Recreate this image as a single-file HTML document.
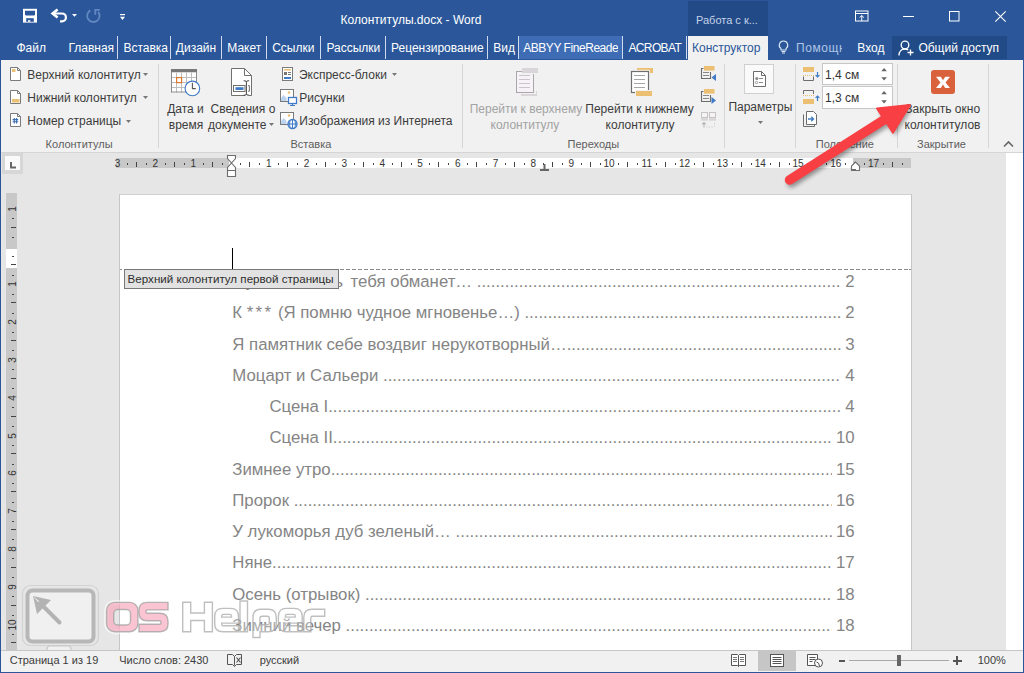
<!DOCTYPE html>
<html><head><meta charset="utf-8"><style>
html,body{margin:0;padding:0;width:1024px;height:673px;overflow:hidden;background:#e6e6e6}
body{position:relative;font-family:"Liberation Sans",sans-serif}
.t{position:absolute;line-height:1;white-space:pre}
.r{position:absolute}
.s{position:absolute;overflow:visible}
.rn{font-size:10px;color:#333}
.vr{transform:rotate(-90deg)}
.toc{position:absolute;display:flex;font-size:16.8px;line-height:1;color:#858585;white-space:pre}
.toc .tt{flex:none}
.toc .dots{flex:1 1 auto;overflow:hidden}
.toc .num{flex:none;padding-left:4px}
.wm{position:absolute;font-family:"Liberation Sans",sans-serif;font-weight:bold;font-size:40px;line-height:40px;color:rgba(244,150,170,.6);-webkit-text-stroke:1px rgba(190,190,190,.6)}
.wm2{position:absolute;font-family:"Liberation Sans",sans-serif;font-weight:bold;font-size:40px;line-height:40px;color:rgba(255,255,255,.4);-webkit-text-stroke:1.5px rgba(170,170,170,.6)}
</style></head><body>
<div class="r" style="left:0px;top:0px;width:1024px;height:60px;background:#2b579a;"></div>
<div class="r" style="left:688px;top:1px;width:80px;height:35px;background:#224a86;"></div>
<div class="t " style="left:696.00px;top:14.69px;font-size:11px;color:#c5d3ea;">Работа с к...</div>
<div class="t " style="left:340.50px;top:13.59px;font-size:12px;color:#ffffff;">Колонтитулы.docx - Word</div>
<svg class="s" style="left:22px;top:8px;" width="16" height="16" viewBox="0 0 16 16"><rect x="1" y="0.8" width="14" height="13.8" fill="#fff"/><path d="M3 2.8h10v3.8l-0.8 0.8h-8.4l-0.8-0.8z" fill="#2b579a"/><rect x="4.2" y="10.2" width="7.6" height="3.6" fill="#2b579a"/><rect x="6" y="12.2" width="2.3" height="1.6" fill="#fff"/></svg>
<svg class="s" style="left:50px;top:8px;" width="18" height="16" viewBox="0 0 18 16"><path d="M3.5 5.5H12A3.9 3.9 0 0 1 12 13.3H10" fill="none" stroke="#fff" stroke-width="2.2"/><path d="M7.6 1.5L2.6 5.5L7.6 9.5" fill="none" stroke="#fff" stroke-width="2.6"/></svg>
<svg class="s" style="left:72px;top:14px;" width="6" height="4" viewBox="0 0 6 4"><path d="M0 0h5l-2.5 2.8z" fill="#fff"/></svg>
<svg class="s" style="left:86px;top:8px;" width="16" height="16" viewBox="0 0 16 16"><path d="M4.3 2.4A6.2 6.2 0 1 0 12.15 3.8" fill="none" stroke="#6288c2" stroke-width="1.8"/><path d="M9.3 6.7V1.9H13.8" fill="none" stroke="#6288c2" stroke-width="1.8"/></svg>
<svg class="s" style="left:120px;top:14px;" width="6" height="7" viewBox="0 0 6 7"><rect x="0" y="0" width="5" height="1.2" fill="#fff"/><path d="M0 2.8h5l-2.5 3.2z" fill="#fff"/></svg>
<svg class="s" style="left:855px;top:10px;" width="14" height="12" viewBox="0 0 14 12"><rect x="0.5" y="1" width="12.5" height="10" fill="none" stroke="#fff"/><rect x="0.5" y="3" width="12.5" height="1" fill="#fff"/><path d="M6.75 11V5.5M4.6 7.6L6.75 5.5l2.15 2.1" fill="none" stroke="#fff"/></svg>
<div class="r" style="left:903px;top:16px;width:11px;height:1px;background:#fff;"></div>
<svg class="s" style="left:949px;top:11px;" width="11" height="11" viewBox="0 0 11 11"><rect x="0.5" y="0.5" width="9.5" height="9.5" fill="none" stroke="#fff"/></svg>
<svg class="s" style="left:995px;top:11px;" width="11" height="11" viewBox="0 0 11 11"><path d="M0.3 0.3l10.4 10.4M10.7 0.3L0.3 10.7" fill="none" stroke="#fff" stroke-width="1.1"/></svg>
<div class="r" style="left:117px;top:36px;width:1px;height:23px;background:#d0dcee;"></div>
<div class="r" style="left:170px;top:36px;width:1px;height:23px;background:#d0dcee;"></div>
<div class="r" style="left:221px;top:36px;width:1px;height:23px;background:#d0dcee;"></div>
<div class="r" style="left:266px;top:36px;width:1px;height:23px;background:#d0dcee;"></div>
<div class="r" style="left:320px;top:36px;width:1px;height:23px;background:#d0dcee;"></div>
<div class="r" style="left:385px;top:36px;width:1px;height:23px;background:#d0dcee;"></div>
<div class="r" style="left:487px;top:36px;width:1px;height:23px;background:#d0dcee;"></div>
<div class="r" style="left:518px;top:36px;width:1px;height:23px;background:#d0dcee;"></div>
<div class="r" style="left:622px;top:36px;width:1px;height:23px;background:#d0dcee;"></div>
<div class="r" style="left:686px;top:36px;width:1px;height:23px;background:#d0dcee;"></div>
<div class="r" style="left:519px;top:36px;width:103px;height:23px;background:#3e6db5;"></div>
<div class="r" style="left:688px;top:36px;width:80px;height:24px;background:#f1f1f1;"></div>
<div class="t " style="left:16.40px;top:41.84px;font-size:12px;color:#ffffff;">Файл</div>
<div class="t " style="left:68.40px;top:41.84px;font-size:12px;color:#ffffff;">Главная</div>
<div class="t " style="left:123.40px;top:41.84px;font-size:12px;color:#ffffff;">Вставка</div>
<div class="t " style="left:175.80px;top:41.84px;font-size:12px;color:#ffffff;">Дизайн</div>
<div class="t " style="left:227.30px;top:41.84px;font-size:12px;color:#ffffff;">Макет</div>
<div class="t " style="left:272.20px;top:41.84px;font-size:12px;color:#ffffff;">Ссылки</div>
<div class="t " style="left:326.40px;top:41.84px;font-size:12px;color:#ffffff;">Рассылки</div>
<div class="t " style="left:391.00px;top:41.84px;font-size:12px;color:#ffffff;">Рецензирование</div>
<div class="t " style="left:493.30px;top:41.84px;font-size:12px;color:#ffffff;">Вид</div>
<div class="r" style="left:519px;top:36px;width:99px;height:23px;overflow:hidden">
<div class="t " style="left:4.20px;top:5.84px;font-size:12px;color:#ffffff;letter-spacing:-0.45px">ABBYY FineReader</div>
</div>
<div class="t " style="left:692.00px;top:41.84px;font-size:12px;color:#2b579a;">Конструктор</div>
<div class="t " style="left:628.50px;top:41.84px;font-size:12px;color:#ffffff;letter-spacing:-0.65px">ACROBAT</div>
<svg class="s" style="left:778px;top:40px;" width="11" height="14" viewBox="0 0 11 14"><path d="M5.5 1a4.2 4.2 0 0 0-2.5 7.6V10h5V8.6A4.2 4.2 0 0 0 5.5 1z" fill="none" stroke="#dce6f4" stroke-width="1.1"/><path d="M3.5 11.5h4M4 13h3" stroke="#dce6f4" stroke-width="1.1"/></svg>
<div class="r" style="left:796px;top:36px;width:46px;height:23px;overflow:hidden">
<div class="t " style="left:0.00px;top:5.84px;font-size:12px;color:#b0c6e6;letter-spacing:0.6px">Помощн</div>
</div>
<div class="t " style="left:857.30px;top:41.84px;font-size:12px;color:#ffffff;">Вход</div>
<div class="r" style="left:892px;top:36px;width:115px;height:23px;background:#214b87;"></div>
<svg class="s" style="left:898px;top:40px;" width="17" height="16" viewBox="0 0 17 16"><circle cx="7" cy="5" r="3.8" fill="none" stroke="#fff" stroke-width="1.3"/><path d="M1 15.5c0-4 2.5-6.5 6-6.5 1.2 0 2.3.3 3.2.9" fill="none" stroke="#fff" stroke-width="1.3"/><path d="M12.5 9.5v6M9.5 12.5h6" stroke="#fff" stroke-width="1.3"/></svg>
<div class="t " style="left:918.40px;top:41.84px;font-size:12px;color:#ffffff;">Общий доступ</div>
<div class="r" style="left:1px;top:60px;width:1022px;height:92px;background:#f1f1f1;"></div>
<div class="r" style="left:1px;top:152px;width:1022px;height:1px;background:#d5d5d5;"></div>
<div class="r" style="left:158px;top:64px;width:1px;height:84px;background:#d6d6d6;"></div>
<div class="r" style="left:462px;top:64px;width:1px;height:84px;background:#d6d6d6;"></div>
<div class="r" style="left:724px;top:64px;width:1px;height:84px;background:#d6d6d6;"></div>
<div class="r" style="left:795px;top:64px;width:1px;height:84px;background:#d6d6d6;"></div>
<div class="r" style="left:897px;top:64px;width:1px;height:84px;background:#d6d6d6;"></div>
<div class="r" style="left:988px;top:64px;width:1px;height:84px;background:#d6d6d6;"></div>
<svg class="s" style="left:10px;top:67px;" width="12" height="15" viewBox="0 0 12 15"><path d="M0.5 0.5h7l3 3v10h-10z" fill="#fff" stroke="#7a7a7a"/><path d="M7.5 0.5v3h3" fill="none" stroke="#7a7a7a"/><rect x="2" y="2" width="3.5" height="3" fill="#ebc073"/></svg>
<div class="t " style="left:27.30px;top:68.84px;font-size:12px;color:#3c3c3c;">Верхний колонтитул</div>
<svg class="s" style="left:143px;top:73px;" width="5" height="3" viewBox="0 0 5 3"><path d="M0 0h5l-2.5 3z" fill="#777"/></svg>
<svg class="s" style="left:10px;top:90px;" width="12" height="15" viewBox="0 0 12 15"><path d="M0.5 0.5h7l3 3v10h-10z" fill="#fff" stroke="#7a7a7a"/><path d="M7.5 0.5v3h3" fill="none" stroke="#7a7a7a"/><rect x="2" y="9" width="7.5" height="3.5" fill="#ebc073"/></svg>
<div class="t " style="left:27.30px;top:91.59px;font-size:12px;color:#3c3c3c;">Нижний колонтитул</div>
<svg class="s" style="left:143px;top:96px;" width="5" height="3" viewBox="0 0 5 3"><path d="M0 0h5l-2.5 3z" fill="#777"/></svg>
<svg class="s" style="left:10px;top:113px;" width="12" height="15" viewBox="0 0 12 15"><path d="M0.5 0.5h7l3 3v10h-10z" fill="#fff" stroke="#7a7a7a"/><path d="M7.5 0.5v3h3" fill="none" stroke="#7a7a7a"/><path d="M4.3 5v5.5M6.6 5v5.5M2.6 6.6h5.6M2.6 8.8h5.6" stroke="#3c6eb4" stroke-width="1.1"/></svg>
<div class="t " style="left:27.30px;top:115.04px;font-size:12px;color:#3c3c3c;">Номер страницы</div>
<svg class="s" style="left:125.5px;top:120px;" width="5" height="3" viewBox="0 0 5 3"><path d="M0 0h5l-2.5 3z" fill="#777"/></svg>
<div class="t " style="left:45.60px;top:139.19px;font-size:11px;color:#5e5e5e;">Колонтитулы</div>
<svg class="s" style="left:171px;top:69px;" width="30" height="28" viewBox="0 0 30 28"><rect x="0" y="0" width="26" height="3.5" fill="#787878"/><rect x="0.5" y="3.5" width="25" height="20" fill="#fff"/><rect x="5" y="3.5" width="1" height="20" fill="#bdbdbd"/><rect x="10" y="3.5" width="1" height="20" fill="#bdbdbd"/><rect x="15" y="3.5" width="1" height="20" fill="#bdbdbd"/><rect x="20" y="3.5" width="1" height="20" fill="#bdbdbd"/><rect x="0" y="8" width="26" height="1" fill="#bdbdbd"/><rect x="0" y="13" width="26" height="1" fill="#bdbdbd"/><rect x="0" y="18" width="26" height="1" fill="#bdbdbd"/><rect x="0" y="3" width="1" height="20.5" fill="#8c8c8c"/><rect x="25" y="3" width="1" height="10" fill="#8c8c8c"/><rect x="0" y="22.5" width="16" height="1" fill="#8c8c8c"/><rect x="5.6" y="8.6" width="5" height="5" fill="#fff" stroke="#e0782c" stroke-width="1.2"/><circle cx="21.4" cy="19.4" r="7.3" fill="#fff" stroke="#3f7bc6" stroke-width="1.1"/><path d="M21.4 13.8V19.6H24.8" fill="none" stroke="#555" stroke-width="1.1"/></svg>
<div class="t " style="left:167.20px;top:102.84px;font-size:12px;color:#3c3c3c;">Дата и</div>
<div class="t " style="left:168.75px;top:119.44px;font-size:12px;color:#3c3c3c;">время</div>
<svg class="s" style="left:231px;top:68px;" width="23" height="29" viewBox="0 0 23 29"><path d="M0.5 0.5H13.5L20.5 7.5V27.5H0.5Z" fill="#fff" stroke="#707070"/><path d="M13.5 0.5V7.5H20.5" fill="none" stroke="#707070"/><rect x="14" y="12" width="4" height="16" fill="#fff"/><rect x="2.5" y="17.5" width="11.5" height="6" fill="#fff" stroke="#707070"/><rect x="4.5" y="19.2" width="8" height="2.8" fill="#3f7bc6"/><path d="M12.6 12.8H13.8Q15.4 12.8 15.4 14.2Q15.4 12.8 17 12.8H18.2M15.4 14.2V25.8M12.6 27.2H13.8Q15.4 27.2 15.4 25.8Q15.4 27.2 17 27.2H18.2" fill="none" stroke="#444" stroke-width="1"/><path d="M17 17.7H18.4V23.2H17" fill="none" stroke="#707070"/></svg>
<div class="t " style="left:210.50px;top:102.84px;font-size:12px;color:#3c3c3c;">Сведения о</div>
<div class="t " style="left:208.00px;top:119.44px;font-size:12px;color:#3c3c3c;">документе</div>
<svg class="s" style="left:269px;top:123px;" width="5" height="3" viewBox="0 0 5 3"><path d="M0 0h5l-2.5 3z" fill="#777"/></svg>
<svg class="s" style="left:282px;top:67px;" width="12" height="15" viewBox="0 0 12 15"><rect x="0.5" y="0.5" width="10" height="13" fill="#fff" stroke="#7a7a7a"/><rect x="2" y="2" width="7" height="1.5" fill="#ebc073"/><rect x="2" y="5" width="3" height="3" fill="#777"/><rect x="6" y="5" width="3" height="1" fill="#777"/><rect x="6" y="7" width="3" height="1" fill="#777"/><rect x="2" y="10" width="7" height="2" fill="#3f7bc6"/></svg>
<div class="t " style="left:298.90px;top:69.04px;font-size:12px;color:#3c3c3c;">Экспресс-блоки</div>
<svg class="s" style="left:392px;top:73px;" width="5" height="3" viewBox="0 0 5 3"><path d="M0 0h5l-2.5 3z" fill="#777"/></svg>
<svg class="s" style="left:280px;top:89px;" width="18" height="17" viewBox="0 0 18 17"><rect x="0.5" y="0.5" width="13" height="12" fill="#fff" stroke="#7a7a7a"/><circle cx="9" cy="3.5" r="1.3" fill="#ebc073"/><path d="M1 12V9l2.5-3 3 3v3z" fill="#bcd3ee"/><rect x="8.5" y="8.5" width="8" height="6" fill="#fff" stroke="#3f7bc6" stroke-width="1.3"/><path d="M12.5 14.5v2M10 16.5h5" stroke="#3f7bc6" stroke-width="1.2"/></svg>
<div class="t " style="left:299.30px;top:92.04px;font-size:12px;color:#3c3c3c;">Рисунки</div>
<svg class="s" style="left:280px;top:112px;" width="18" height="17" viewBox="0 0 18 17"><rect x="0.5" y="0.5" width="13" height="12" fill="#fff" stroke="#7a7a7a"/><circle cx="9" cy="3.5" r="1.3" fill="#ebc073"/><path d="M1 12V9l2.5-3 3 3v3z" fill="#bcd3ee"/><circle cx="12.5" cy="12" r="4.5" fill="#fff" stroke="#3f7bc6" stroke-width="1.3"/><path d="M8 12h9M12.5 7.5v9M10.3 8.2c-1 2.5-1 5 0 7.6M14.7 8.2c1 2.5 1 5 0 7.6" fill="none" stroke="#3f7bc6" stroke-width="1"/></svg>
<div class="t " style="left:299.30px;top:115.04px;font-size:12px;color:#3c3c3c;">Изображения из Интернета</div>
<div class="t " style="left:290.50px;top:139.19px;font-size:11px;color:#5e5e5e;">Вставка</div>
<svg class="s" style="left:516px;top:67px;" width="23" height="30" viewBox="0 0 23 30"><rect x="0.5" y="4.5" width="17" height="21" fill="#f7f2f7" stroke="#a8a8a8"/><rect x="6" y="1" width="16" height="5" fill="#d9d5d9"/><rect x="4.5" y="6" width="18" height="2" fill="#f1f1f1"/><rect x="6" y="1" width="16" height="5" fill="#d9d5d9"/><path d="M17.5 7v18.5" stroke="#a8a8a8"/><rect x="3" y="8" width="11" height="1" fill="#c9c5c9"/><rect x="3" y="12" width="11" height="1" fill="#c9c5c9"/><rect x="3" y="16" width="11" height="1" fill="#c9c5c9"/><rect x="3" y="20" width="11" height="1" fill="#c9c5c9"/><rect x="5" y="27" width="16" height="2" fill="#d9d5d9"/><rect x="20" y="24" width="1" height="5" fill="#d9d5d9"/></svg>
<svg class="s" style="left:631px;top:67px;" width="23" height="30" viewBox="0 0 23 30"><rect x="6" y="1" width="16" height="5" fill="#ebc073"/><rect x="0.5" y="4.5" width="17" height="21" fill="#fff" stroke="#6f6f6f" stroke-width="1.2"/><rect x="18.2" y="3.5" width="0.8" height="3" fill="#f1f1f1"/><rect x="4.5" y="2.8" width="14.5" height="0.9" fill="#f1f1f1"/><rect x="3" y="8" width="11" height="1" fill="#a6a6a6"/><rect x="3" y="12" width="11" height="1" fill="#a6a6a6"/><rect x="3" y="16" width="11" height="1" fill="#a6a6a6"/><rect x="3" y="20" width="11" height="1" fill="#a6a6a6"/><rect x="4" y="23" width="18" height="6" fill="#f1f1f1"/><rect x="5" y="24" width="16" height="5" fill="#ebc073"/></svg>
<div class="t " style="left:469.70px;top:102.84px;font-size:12px;color:#a3a3a3;">Перейти к верхнему</div>
<div class="t " style="left:490.50px;top:119.44px;font-size:12px;color:#a3a3a3;">колонтитулу</div>
<div class="t " style="left:585.30px;top:102.84px;font-size:12px;color:#3c3c3c;">Перейти к нижнему</div>
<div class="t " style="left:605.60px;top:119.44px;font-size:12px;color:#3c3c3c;">колонтитулу</div>
<div class="t " style="left:567.50px;top:139.19px;font-size:11px;color:#5e5e5e;">Переходы</div>
<svg class="s" style="left:701px;top:66px;" width="16" height="16" viewBox="0 0 16 16"><rect x="3" y="0" width="10.5" height="4.6" fill="#ebc073"/><path d="M2.5 2.5H0.5V12.5H9.5V6" fill="none" stroke="#6d6d6d" stroke-width="1.1"/><rect x="2" y="6" width="6" height="1" fill="#888"/><rect x="2" y="9" width="6" height="1" fill="#888"/><path d="M15 8v7l-4.5-3.5z" fill="#3f7bc6"/></svg>
<svg class="s" style="left:701px;top:89px;" width="16" height="16" viewBox="0 0 16 16"><rect x="3" y="0" width="10.5" height="4.6" fill="#ebc073"/><path d="M2.5 2.5H0.5V12.5H9.5V6" fill="none" stroke="#6d6d6d" stroke-width="1.1"/><rect x="2" y="6" width="6" height="1" fill="#888"/><rect x="2" y="9" width="6" height="1" fill="#888"/><path d="M10.5 8v7l4.5-3.5z" fill="#3f7bc6"/></svg>
<svg class="s" style="left:701px;top:112px;" width="16" height="17" viewBox="0 0 16 17"><rect x="0.5" y="0.5" width="6" height="5" fill="#f6f2f6" stroke="#c4c4c4"/><rect x="8.5" y="0.5" width="6" height="5" fill="#f6f2f6" stroke="#c4c4c4"/><rect x="0" y="6.2" width="7" height="2.5" fill="#d6d6d6"/><rect x="8" y="6.2" width="7" height="2.5" fill="#d6d6d6"/><path d="M3 15.5v-5M1.2 12.3L3 10.5l1.8 1.8" fill="none" stroke="#b4b4b4" stroke-width="1.1"/><path d="M5.5 15h1M8 15h1M10.5 15h1M13.5 11v1M13.5 13.5v1" stroke="#c4c4c4"/></svg>
<div class="r" style="left:744px;top:64px;width:30px;height:30px;background:#fafafa;box-sizing:border-box;border:1px solid #d0d0d0"></div>
<svg class="s" style="left:753px;top:71px;" width="14" height="17" viewBox="0 0 14 17"><path d="M0.5 0.5h8l4 4v11h-12z" fill="#fff" stroke="#6d6d6d"/><path d="M8.5 0.5v4h4" fill="none" stroke="#6d6d6d"/><circle cx="3.8" cy="7.5" r="1.5" fill="#888"/><circle cx="3.5" cy="11.5" r="1.2" fill="none" stroke="#888" stroke-width=".8"/><rect x="6" y="7" width="4" height="1" fill="#888"/><rect x="6" y="11" width="4" height="1" fill="#888"/></svg>
<div class="t " style="left:728.40px;top:100.54px;font-size:12px;color:#3c3c3c;">Параметры</div>
<svg class="s" style="left:758px;top:121px;" width="5" height="3" viewBox="0 0 5 3"><path d="M0 0h5l-2.5 3z" fill="#777"/></svg>
<svg class="s" style="left:802px;top:66px;" width="19" height="16" viewBox="0 0 19 16"><rect x="1" y="1" width="11" height="5" fill="#ebc073"/><path d="M1 9.5H12" stroke="#ebc073" stroke-dasharray="1 1"/><path d="M1.5 10.5V14.5H11.5V10.5" fill="none" stroke="#6d6d6d"/><path d="M15.5 6V11M13.6 9.1L15.5 11L17.4 9.1" fill="none" stroke="#3f7bc6" stroke-width="1.2"/></svg>
<svg class="s" style="left:802px;top:89px;" width="19" height="16" viewBox="0 0 19 16"><path d="M1.5 5V1.5H11.5V5" fill="none" stroke="#6d6d6d"/><path d="M1 6.5H12" stroke="#ebc073" stroke-dasharray="1 1"/><rect x="1" y="10" width="11" height="5" fill="#ebc073"/><path d="M15.5 12V7M13.6 8.9L15.5 7L17.4 8.9" fill="none" stroke="#3f7bc6" stroke-width="1.2"/></svg>
<svg class="s" style="left:803px;top:111px;" width="15" height="17" viewBox="0 0 15 17"><path d="M3.5 0.5H10.5L13.5 3.5V13.5H3.5Z" fill="#fff" stroke="#6d6d6d"/><path d="M0.5 3.5V15.5H11.5V13.5" fill="none" stroke="#6d6d6d"/><path d="M5 8H10.5M8.3 5.8L10.5 8L8.3 10.2" fill="none" stroke="#3f7bc6" stroke-width="1.3"/></svg>
<div class="r" style="left:822px;top:63px;width:71px;height:22px;background:#ffffff;box-sizing:border-box;border:1px solid #c6c6c6"></div>
<div class="t " style="left:825.00px;top:68.94px;font-size:12px;color:#333;">1,4 см</div>
<svg class="s" style="left:881px;top:67px;" width="7" height="14" viewBox="0 0 7 14"><path d="M0.3 4.3h5.6l-2.8-3.2z" fill="#666"/><path d="M0.3 10.3h5.6l-2.8 3.2z" fill="#666"/></svg>
<div class="r" style="left:822px;top:86px;width:71px;height:23px;background:#ffffff;box-sizing:border-box;border:1px solid #c6c6c6"></div>
<div class="t " style="left:825.00px;top:91.84px;font-size:12px;color:#333;">1,3 см</div>
<svg class="s" style="left:881px;top:90px;" width="7" height="14" viewBox="0 0 7 14"><path d="M0.3 4.3h5.6l-2.8-3.2z" fill="#666"/><path d="M0.3 10.3h5.6l-2.8 3.2z" fill="#666"/></svg>
<div class="t " style="left:815.80px;top:139.19px;font-size:11px;color:#5e5e5e;">Положение</div>
<svg class="s" style="left:931px;top:70px;" width="24" height="24" viewBox="0 0 24 24"><rect x="0" y="0" width="24" height="24" rx="3" fill="#d9613c"/><path d="M5 6.8H9.8L12 10.2L14.2 6.8H19L14.5 12.4L19 18H14.2L12 14.6L9.8 18H5L9.5 12.4Z" fill="#fff"/></svg>
<div class="t " style="left:905.30px;top:102.84px;font-size:12px;color:#3c3c3c;">Закрыть окно</div>
<div class="t " style="left:904.50px;top:119.44px;font-size:12px;color:#3c3c3c;">колонтитулов</div>
<div class="t " style="left:917.00px;top:139.19px;font-size:11px;color:#5e5e5e;">Закрытие</div>
<svg class="s" style="left:1003px;top:140px;" width="11" height="8" viewBox="0 0 11 8"><path d="M1 6.5l4.5-4.5 4.5 4.5" fill="none" stroke="#666" stroke-width="1.6"/></svg>
<div class="r" style="left:1px;top:153px;width:1005px;height:498px;background:#e6e6e6;"></div>
<div class="r" style="left:1006px;top:153px;width:17px;height:498px;background:#ffffff;"></div>
<div class="r" style="left:2px;top:153px;width:21px;height:21px;background:#d7d7d7;"></div>
<div class="r" style="left:5px;top:156px;width:15px;height:14px;background:#fafafa;"></div>
<svg class="s" style="left:10px;top:161px;" width="7" height="8" viewBox="0 0 7 8"><path d="M1 1v5.5h5" fill="none" stroke="#666" stroke-width="2"/></svg>
<div class="r" style="left:116px;top:158px;width:113px;height:10px;background:#c8c8c8;"></div>
<div class="r" style="left:229px;top:158px;width:624px;height:10px;background:#ffffff;"></div>
<div class="r" style="left:853px;top:158px;width:58px;height:10px;background:#c8c8c8;"></div>
<div class="t rn" style="left:107.60px;top:158.5px;width:20px;text-align:center">3</div><div class="r" style="left:127px;top:163px;width:1px;height:2px;background:#444"></div><div class="r" style="left:136px;top:162px;width:1px;height:5px;background:#444"></div><div class="r" style="left:146px;top:163px;width:1px;height:2px;background:#444"></div><div class="t rn" style="left:145.40px;top:158.5px;width:20px;text-align:center">2</div><div class="r" style="left:165px;top:163px;width:1px;height:2px;background:#444"></div><div class="r" style="left:174px;top:162px;width:1px;height:5px;background:#444"></div><div class="r" style="left:184px;top:163px;width:1px;height:2px;background:#444"></div><div class="t rn" style="left:183.20px;top:158.5px;width:20px;text-align:center">1</div><div class="r" style="left:203px;top:163px;width:1px;height:2px;background:#444"></div><div class="r" style="left:212px;top:162px;width:1px;height:5px;background:#444"></div><div class="r" style="left:222px;top:163px;width:1px;height:2px;background:#444"></div><div class="r" style="left:240px;top:163px;width:1px;height:2px;background:#444"></div><div class="r" style="left:249px;top:162px;width:1px;height:5px;background:#444"></div><div class="r" style="left:259px;top:163px;width:1px;height:2px;background:#444"></div><div class="t rn" style="left:258.80px;top:158.5px;width:20px;text-align:center">1</div><div class="r" style="left:278px;top:163px;width:1px;height:2px;background:#444"></div><div class="r" style="left:287px;top:162px;width:1px;height:5px;background:#444"></div><div class="r" style="left:297px;top:163px;width:1px;height:2px;background:#444"></div><div class="t rn" style="left:296.60px;top:158.5px;width:20px;text-align:center">2</div><div class="r" style="left:316px;top:163px;width:1px;height:2px;background:#444"></div><div class="r" style="left:325px;top:162px;width:1px;height:5px;background:#444"></div><div class="r" style="left:335px;top:163px;width:1px;height:2px;background:#444"></div><div class="t rn" style="left:334.40px;top:158.5px;width:20px;text-align:center">3</div><div class="r" style="left:354px;top:163px;width:1px;height:2px;background:#444"></div><div class="r" style="left:363px;top:162px;width:1px;height:5px;background:#444"></div><div class="r" style="left:373px;top:163px;width:1px;height:2px;background:#444"></div><div class="t rn" style="left:372.20px;top:158.5px;width:20px;text-align:center">4</div><div class="r" style="left:392px;top:163px;width:1px;height:2px;background:#444"></div><div class="r" style="left:401px;top:162px;width:1px;height:5px;background:#444"></div><div class="r" style="left:411px;top:163px;width:1px;height:2px;background:#444"></div><div class="t rn" style="left:410.00px;top:158.5px;width:20px;text-align:center">5</div><div class="r" style="left:429px;top:163px;width:1px;height:2px;background:#444"></div><div class="r" style="left:438px;top:162px;width:1px;height:5px;background:#444"></div><div class="r" style="left:448px;top:163px;width:1px;height:2px;background:#444"></div><div class="t rn" style="left:447.80px;top:158.5px;width:20px;text-align:center">6</div><div class="r" style="left:467px;top:163px;width:1px;height:2px;background:#444"></div><div class="r" style="left:476px;top:162px;width:1px;height:5px;background:#444"></div><div class="r" style="left:486px;top:163px;width:1px;height:2px;background:#444"></div><div class="t rn" style="left:485.60px;top:158.5px;width:20px;text-align:center">7</div><div class="r" style="left:505px;top:163px;width:1px;height:2px;background:#444"></div><div class="r" style="left:514px;top:162px;width:1px;height:5px;background:#444"></div><div class="r" style="left:524px;top:163px;width:1px;height:2px;background:#444"></div><div class="t rn" style="left:523.40px;top:158.5px;width:20px;text-align:center">8</div><div class="r" style="left:543px;top:163px;width:1px;height:2px;background:#444"></div><div class="r" style="left:552px;top:162px;width:1px;height:5px;background:#444"></div><div class="r" style="left:562px;top:163px;width:1px;height:2px;background:#444"></div><div class="t rn" style="left:561.20px;top:158.5px;width:20px;text-align:center">9</div><div class="r" style="left:581px;top:163px;width:1px;height:2px;background:#444"></div><div class="r" style="left:590px;top:162px;width:1px;height:5px;background:#444"></div><div class="r" style="left:600px;top:163px;width:1px;height:2px;background:#444"></div><div class="t rn" style="left:599.00px;top:158.5px;width:20px;text-align:center">10</div><div class="r" style="left:618px;top:163px;width:1px;height:2px;background:#444"></div><div class="r" style="left:627px;top:162px;width:1px;height:5px;background:#444"></div><div class="r" style="left:637px;top:163px;width:1px;height:2px;background:#444"></div><div class="t rn" style="left:636.80px;top:158.5px;width:20px;text-align:center">11</div><div class="r" style="left:656px;top:163px;width:1px;height:2px;background:#444"></div><div class="r" style="left:665px;top:162px;width:1px;height:5px;background:#444"></div><div class="r" style="left:675px;top:163px;width:1px;height:2px;background:#444"></div><div class="t rn" style="left:674.60px;top:158.5px;width:20px;text-align:center">12</div><div class="r" style="left:694px;top:163px;width:1px;height:2px;background:#444"></div><div class="r" style="left:703px;top:162px;width:1px;height:5px;background:#444"></div><div class="r" style="left:713px;top:163px;width:1px;height:2px;background:#444"></div><div class="t rn" style="left:712.40px;top:158.5px;width:20px;text-align:center">13</div><div class="r" style="left:732px;top:163px;width:1px;height:2px;background:#444"></div><div class="r" style="left:741px;top:162px;width:1px;height:5px;background:#444"></div><div class="r" style="left:751px;top:163px;width:1px;height:2px;background:#444"></div><div class="t rn" style="left:750.20px;top:158.5px;width:20px;text-align:center">14</div><div class="r" style="left:770px;top:163px;width:1px;height:2px;background:#444"></div><div class="r" style="left:779px;top:162px;width:1px;height:5px;background:#444"></div><div class="r" style="left:789px;top:163px;width:1px;height:2px;background:#444"></div><div class="t rn" style="left:788.00px;top:158.5px;width:20px;text-align:center">15</div><div class="r" style="left:807px;top:163px;width:1px;height:2px;background:#444"></div><div class="r" style="left:816px;top:162px;width:1px;height:5px;background:#444"></div><div class="r" style="left:826px;top:163px;width:1px;height:2px;background:#444"></div><div class="t rn" style="left:825.80px;top:158.5px;width:20px;text-align:center">16</div><div class="r" style="left:845px;top:163px;width:1px;height:2px;background:#444"></div><div class="r" style="left:854px;top:162px;width:1px;height:5px;background:#444"></div><div class="r" style="left:864px;top:163px;width:1px;height:2px;background:#444"></div><div class="t rn" style="left:863.60px;top:158.5px;width:20px;text-align:center">17</div><div class="r" style="left:883px;top:163px;width:1px;height:2px;background:#444"></div><div class="r" style="left:892px;top:162px;width:1px;height:5px;background:#444"></div><div class="r" style="left:902px;top:163px;width:1px;height:2px;background:#444"></div>
<svg class="s" style="left:226px;top:154px;" width="12" height="24" viewBox="0 0 12 24"><path d="M1.5 1.5H9.5V4.5L5.5 9L9.5 13.5V22.5H1.5V13.5L5.5 9L1.5 4.5Z M1.5 16.5H9.5" fill="#fff" stroke="#6d6d6d" stroke-width="1.1"/></svg>
<svg class="s" style="left:850px;top:161px;" width="11" height="11" viewBox="0 0 11 11"><path d="M1.5 9.5V5L5.5 1L9.5 5V9.5Z" fill="#fff" stroke="#6d6d6d" stroke-width="1.1"/><rect x="1" y="8" width="5" height="2" fill="#6d6d6d"/></svg>
<svg class="s" style="left:540px;top:164px;" width="9" height="7" viewBox="0 0 9 7"><rect x="3.5" y="0" width="2" height="6" fill="#666"/><rect x="0" y="5" width="9" height="2" fill="#666"/></svg>
<div class="r" style="left:6px;top:193px;width:11px;height:458px;background:#c8c8c8;"></div>
<div class="r" style="left:6px;top:249px;width:11px;height:19px;background:#ffffff;"></div>
<div class="t rn vr" style="left:3px;top:203.70px;width:20px;height:10px;text-align:center">1</div><div class="r" style="left:12px;top:218px;width:2px;height:1px;background:#444"></div><div class="r" style="left:11px;top:227px;width:5px;height:1px;background:#444"></div><div class="r" style="left:12px;top:237px;width:2px;height:1px;background:#444"></div><div class="r" style="left:12px;top:256px;width:2px;height:1px;background:#444"></div><div class="r" style="left:11px;top:264px;width:5px;height:1px;background:#444"></div><div class="r" style="left:12px;top:275px;width:2px;height:1px;background:#444"></div><div class="t rn vr" style="left:3px;top:279.30px;width:20px;height:10px;text-align:center">1</div><div class="r" style="left:12px;top:294px;width:2px;height:1px;background:#444"></div><div class="r" style="left:11px;top:302px;width:5px;height:1px;background:#444"></div><div class="r" style="left:12px;top:313px;width:2px;height:1px;background:#444"></div><div class="t rn vr" style="left:3px;top:317.10px;width:20px;height:10px;text-align:center">2</div><div class="r" style="left:12px;top:332px;width:2px;height:1px;background:#444"></div><div class="r" style="left:11px;top:340px;width:5px;height:1px;background:#444"></div><div class="r" style="left:12px;top:350px;width:2px;height:1px;background:#444"></div><div class="t rn vr" style="left:3px;top:354.90px;width:20px;height:10px;text-align:center">3</div><div class="r" style="left:12px;top:369px;width:2px;height:1px;background:#444"></div><div class="r" style="left:11px;top:378px;width:5px;height:1px;background:#444"></div><div class="r" style="left:12px;top:388px;width:2px;height:1px;background:#444"></div><div class="t rn vr" style="left:3px;top:392.70px;width:20px;height:10px;text-align:center">4</div><div class="r" style="left:12px;top:407px;width:2px;height:1px;background:#444"></div><div class="r" style="left:11px;top:416px;width:5px;height:1px;background:#444"></div><div class="r" style="left:12px;top:426px;width:2px;height:1px;background:#444"></div><div class="t rn vr" style="left:3px;top:430.50px;width:20px;height:10px;text-align:center">5</div><div class="r" style="left:12px;top:445px;width:2px;height:1px;background:#444"></div><div class="r" style="left:11px;top:453px;width:5px;height:1px;background:#444"></div><div class="r" style="left:12px;top:464px;width:2px;height:1px;background:#444"></div><div class="t rn vr" style="left:3px;top:468.30px;width:20px;height:10px;text-align:center">6</div><div class="r" style="left:12px;top:483px;width:2px;height:1px;background:#444"></div><div class="r" style="left:11px;top:491px;width:5px;height:1px;background:#444"></div><div class="r" style="left:12px;top:502px;width:2px;height:1px;background:#444"></div><div class="t rn vr" style="left:3px;top:506.10px;width:20px;height:10px;text-align:center">7</div><div class="r" style="left:12px;top:521px;width:2px;height:1px;background:#444"></div><div class="r" style="left:11px;top:529px;width:5px;height:1px;background:#444"></div><div class="r" style="left:12px;top:539px;width:2px;height:1px;background:#444"></div><div class="t rn vr" style="left:3px;top:543.90px;width:20px;height:10px;text-align:center">8</div><div class="r" style="left:12px;top:558px;width:2px;height:1px;background:#444"></div><div class="r" style="left:11px;top:567px;width:5px;height:1px;background:#444"></div><div class="r" style="left:12px;top:577px;width:2px;height:1px;background:#444"></div><div class="t rn vr" style="left:3px;top:581.70px;width:20px;height:10px;text-align:center">9</div><div class="r" style="left:12px;top:596px;width:2px;height:1px;background:#444"></div><div class="r" style="left:11px;top:605px;width:5px;height:1px;background:#444"></div><div class="r" style="left:12px;top:615px;width:2px;height:1px;background:#444"></div><div class="t rn vr" style="left:3px;top:619.50px;width:20px;height:10px;text-align:center">10</div><div class="r" style="left:12px;top:634px;width:2px;height:1px;background:#444"></div><div class="r" style="left:11px;top:642px;width:5px;height:1px;background:#444"></div>
<div class="r" style="left:119px;top:194px;width:793px;height:457px;background:#ffffff;box-sizing:border-box;border-left:1px solid #c6c6c6;border-right:1px solid #c6c6c6;border-top:1px solid #d0d0d0"></div>
<div class="r" style="left:120px;top:269px;width:791px;height:1px;background:repeating-linear-gradient(90deg,#8a8a8a 0 4px,transparent 4px 6px);background-position:-2px 0"></div>
<div class="r" style="left:232px;top:248px;width:1px;height:21px;background:#000;"></div>
<div class="toc" style="left:232.3px;top:273.98px;width:622.3px"><span class="tt"><span style="letter-spacing:1.46px">Пусть жизнь </span>тебя обманет… </span><span class="dots">........................................................................................................................................................................................................</span><span class="num">2</span></div>
<div class="toc" style="left:232.3px;top:305.25px;width:622.3px"><span class="tt">К <span style="letter-spacing:2.3px">***</span> (Я помню чудное мгновенье…) </span><span class="dots">........................................................................................................................................................................................................</span><span class="num">2</span></div>
<div class="toc" style="left:232.3px;top:336.52px;width:622.3px"><span class="tt">Я памятник себе воздвиг нерукотворный…</span><span class="dots">........................................................................................................................................................................................................</span><span class="num">3</span></div>
<div class="toc" style="left:232.3px;top:367.79px;width:622.3px"><span class="tt">Моцарт и Сальери </span><span class="dots">........................................................................................................................................................................................................</span><span class="num">4</span></div>
<div class="toc" style="left:269.4px;top:399.06px;width:585.2px"><span class="tt">Сцена I</span><span class="dots">........................................................................................................................................................................................................</span><span class="num">4</span></div>
<div class="toc" style="left:269.4px;top:430.33px;width:585.2px"><span class="tt">Сцена II</span><span class="dots">........................................................................................................................................................................................................</span><span class="num">10</span></div>
<div class="toc" style="left:232.3px;top:461.60px;width:622.3px"><span class="tt">Зимнее утро</span><span class="dots">........................................................................................................................................................................................................</span><span class="num">15</span></div>
<div class="toc" style="left:232.3px;top:492.87px;width:622.3px"><span class="tt">Пророк </span><span class="dots">........................................................................................................................................................................................................</span><span class="num">16</span></div>
<div class="toc" style="left:232.3px;top:524.14px;width:622.3px"><span class="tt">У лукоморья дуб зеленый… </span><span class="dots">........................................................................................................................................................................................................</span><span class="num">16</span></div>
<div class="toc" style="left:232.3px;top:555.41px;width:622.3px"><span class="tt">Няне</span><span class="dots">........................................................................................................................................................................................................</span><span class="num">17</span></div>
<div class="toc" style="left:232.3px;top:586.68px;width:622.3px"><span class="tt">Осень (отрывок) </span><span class="dots">........................................................................................................................................................................................................</span><span class="num">18</span></div>
<div class="toc" style="left:232.3px;top:617.95px;width:622.3px"><span class="tt">Зимний вечер </span><span class="dots">........................................................................................................................................................................................................</span><span class="num">18</span></div>
<div class="r" style="left:124px;top:269px;width:215px;height:20px;box-sizing:border-box;border:1px solid #787878;background:#e2e2e2"></div>
<div class="t " style="left:127.60px;top:272.78px;font-size:11.6px;color:#2e2e2e;">Верхний колонтитул первой страницы</div>
<svg class="s" style="left:20px;top:584px;" width="82" height="68" viewBox="0 0 82 68"><rect x="2.5" y="1.5" width="76" height="60" rx="8" fill="none" stroke="#d2d2d2" stroke-width="1.2"/><rect x="7.5" y="6.5" width="66" height="51" rx="5" fill="#f0f0f0" stroke="#b7b7b7" stroke-width="4"/><path d="M13 12l18 4-6 6z M13 12l4 18 6-6z" fill="#b3b3b3"/><path d="M20 19l19.5 19.5" stroke="#b3b3b3" stroke-width="4" stroke-linecap="round"/><path d="M27 68v-3a3 3 0 0 1 3-3h18a3 3 0 0 1 3 3v3" fill="#f0f0f0" stroke="#c8c8c8" stroke-width="1.2"/></svg>
<svg class="s" style="left:100px;top:590px" width="240" height="55" viewBox="0 0 240 55">
<g fill-rule="evenodd">
<g stroke="#ffffff" stroke-width="5" stroke-opacity="0.55" fill="none">
<path d="M14.6 12.4H29.9A8 8 0 0 1 37.9 20.4V33.7A8 8 0 0 1 29.9 41.7H14.6A8 8 0 0 1 6.6 33.7V20.4A8 8 0 0 1 14.6 12.4Z"/>
<path d="M47 12.4H68V19.9H47.5Q46 19.9 46 21.4V21.8Q46 23.3 47.5 23.3H60Q68 23.3 68 31.3V34Q68 41.7 60 41.7H39V34.2H59.5Q61 34.2 61 32.7V32.3Q61 30.8 59.5 30.8H47Q39 30.8 39 22.8V20.4Q39 12.4 47 12.4Z"/>
</g>
<path fill="rgba(247,165,186,0.66)" stroke="rgba(160,160,160,0.75)" stroke-width="1.4" d="M14.6 12.4H29.9A8 8 0 0 1 37.9 20.4V33.7A8 8 0 0 1 29.9 41.7H14.6A8 8 0 0 1 6.6 33.7V20.4A8 8 0 0 1 14.6 12.4Z M17.7 19.5H26.5A4 4 0 0 1 30.5 23.5V31A4 4 0 0 1 26.5 35H17.7A4 4 0 0 1 13.7 31V23.5A4 4 0 0 1 17.7 19.5Z"/>
<path fill="rgba(247,165,186,0.66)" stroke="rgba(160,160,160,0.75)" stroke-width="1.4" d="M47 12.4H68V19.9H47.5Q46 19.9 46 21.4V21.8Q46 23.3 47.5 23.3H60Q68 23.3 68 31.3V34Q68 41.7 60 41.7H39V34.2H59.5Q61 34.2 61 32.7V32.3Q61 30.8 59.5 30.8H47Q39 30.8 39 22.8V20.4Q39 12.4 47 12.4Z"/>
<g fill="rgba(255,255,255,0.3)" stroke="rgba(175,175,175,0.8)" stroke-width="1.4">
<path d="M82.7 12.2H90.7V23H104.4V12.2H112.4V41.8H104.4V30.5H90.7V41.8H82.7Z"/>
<path d="M122.7 18.4H130.5Q138.5 18.4 138.5 26.4V33.1H121.7V34.3Q121.7 35.8 123.2 35.8H138.5V41.8H122.7Q114.7 41.8 114.7 33.8V26.4Q114.7 18.4 122.7 18.4Z M123.2 24.4H130Q131.5 24.4 131.5 25.9V27.1H121.7V25.9Q121.7 24.4 123.2 24.4Z"/>
<path d="M140 11H147.5V41.8H140Z"/>
<path d="M161 19.2H168.3Q176.3 19.2 176.3 27.2V33.7Q176.3 41.7 168.3 41.7H160V47.5H153V27.2Q153 19.2 161 19.2Z M162 26.2H167.3Q169.3 26.2 169.3 28.2V32.7Q169.3 34.7 167.3 34.7H160V28.2Q160 26.2 162 26.2Z"/>
<path d="M186.4 18.4H194.2Q202.2 18.4 202.2 26.4V33.1H185.4V34.3Q185.4 35.8 186.9 35.8H202.2V41.8H186.4Q178.4 41.8 178.4 33.8V26.4Q178.4 18.4 186.4 18.4Z M186.9 24.4H193.7Q195.2 24.4 195.2 25.9V27.1H185.4V25.9Q185.4 24.4 186.9 24.4Z"/>
<path d="M203.8 41.7V27.2Q203.8 19.2 211.8 19.2H224.7V26.2H212.8Q210.8 26.2 210.8 28.2V41.7Z"/>
</g>
</g></svg>
<div class="r" style="left:1px;top:650px;width:1022px;height:22px;background:#f1f1f1;"></div>
<div class="r" style="left:1px;top:650px;width:1022px;height:1px;background:#c6c6c6;"></div>
<div class="t " style="left:9.70px;top:655.19px;font-size:11px;color:#3c3c3c;">Страница 1 из 19</div>
<div class="t " style="left:119.20px;top:655.19px;font-size:11px;color:#3c3c3c;">Число слов: 2430</div>
<svg class="s" style="left:227px;top:654px;" width="15" height="13" viewBox="0 0 15 13"><path d="M0.5 0.5h5l2 2 2-2h5v10h-5l-2 2-2-2h-5z" fill="none" stroke="#555"/><path d="M7.5 2.5v9" stroke="#555"/><path d="M9.5 3.5l4 5M13.5 3.5l-4 5" stroke="#555" stroke-width="1.2"/></svg>
<div class="t " style="left:259.70px;top:655.19px;font-size:11px;color:#3c3c3c;">русский</div>
<div class="r" style="left:758px;top:651px;width:38px;height:20px;background:#c6c6c6;"></div>
<svg class="s" style="left:731px;top:654px;" width="15" height="14" viewBox="0 0 15 14"><path d="M0.5 0.5h6l1 1 1-1h6v11h-6l-1 1-1-1h-6z" fill="#fff" stroke="#555"/><path d="M7.5 1.5v11" stroke="#555"/><path d="M2 3.5h4M2 5.5h4M2 7.5h4M9 3.5h4M9 5.5h4M9 7.5h4" stroke="#777"/></svg>
<svg class="s" style="left:770px;top:654px;" width="15" height="13" viewBox="0 0 15 13"><rect x="0.5" y="0.5" width="13" height="12" fill="#fff" stroke="#555"/><path d="M2.5 3.5h9M2.5 5.5h9M2.5 7.5h9M2.5 9.5h9" stroke="#555"/></svg>
<svg class="s" style="left:807px;top:654px;" width="17" height="14" viewBox="0 0 17 14"><path d="M0.5 0.5h10v11h-10z" fill="#fff" stroke="#555"/><path d="M2.5 3.5h6M2.5 5.5h6M2.5 7.5h3" stroke="#555"/><circle cx="11.5" cy="9" r="4" fill="#fff" stroke="#555"/><path d="M9.5 8l2 1 1 3" fill="none" stroke="#555"/></svg>
<div class="r" style="left:839px;top:660px;width:6px;height:2px;background:#555;"></div>
<div class="r" style="left:849px;top:660px;width:100px;height:1px;background:#a9a9a9;"></div>
<div class="r" style="left:897px;top:655px;width:4px;height:11px;background:#666;"></div>
<div class="r" style="left:953px;top:660px;width:9px;height:2px;background:#555;"></div>
<div class="r" style="left:956px;top:656px;width:2px;height:9px;background:#555;"></div>
<div class="t " style="left:977.70px;top:655.19px;font-size:11px;color:#3c3c3c;">100%</div>
<div class="r" style="left:0px;top:0px;width:1px;height:673px;background:#2b579a;"></div>
<div class="r" style="left:1023px;top:0px;width:1px;height:673px;background:#2b579a;"></div>
<div class="r" style="left:0px;top:672px;width:1024px;height:1px;background:#2b579a;"></div>
<svg class="s" style="left:760px;top:90px" width="170" height="110" viewBox="0 0 170 110">
<defs><filter id="sh" x="-20%" y="-20%" width="140%" height="140%"><feGaussianBlur stdDeviation="2"/></filter></defs>
<g transform="translate(2,3)" filter="url(#sh)" opacity="0.38"><path d="M29.5 90L130 26" stroke="#000" stroke-width="9" stroke-linecap="round"/><path d="M150 15L117 18.5L133 42.6z" fill="#000"/></g>
<path d="M29.5 90L130 26" stroke="#f83f43" stroke-width="9.5" stroke-linecap="round"/>
<path d="M150 15L117 18.5L133 42.6z" fill="#f83f43" stroke="#f83f43" stroke-width="2" stroke-linejoin="round"/>
</svg>
</body></html>
